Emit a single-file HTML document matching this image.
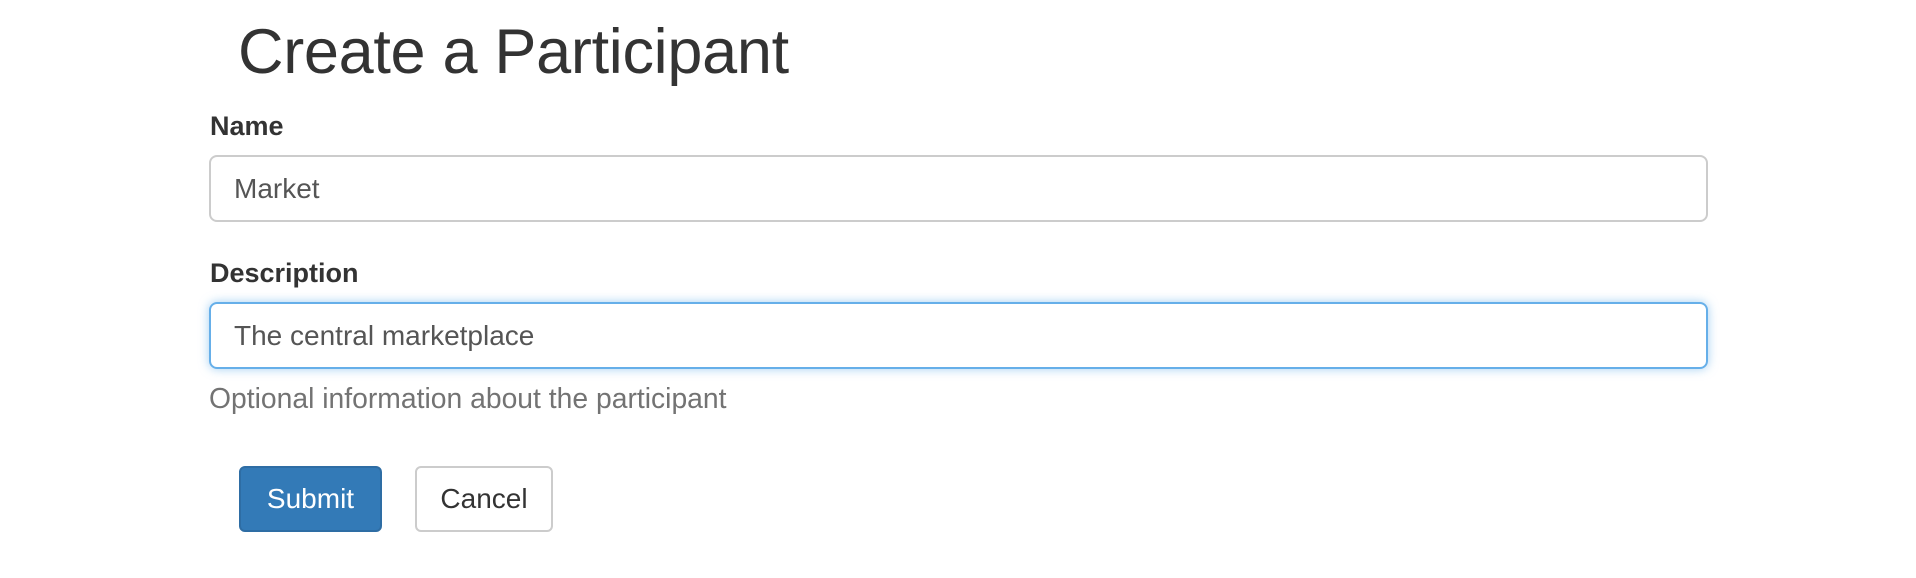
<!DOCTYPE html>
<html><head><style>
body{margin:0;width:1916px;height:578px;background:#fff;font-family:"Liberation Sans",Arial,sans-serif;color:#333;position:relative;overflow:hidden}
h1{position:absolute;left:238px;top:12px;margin:0;font-size:63px;font-weight:normal;line-height:80px;color:#333;letter-spacing:-0.3px}
label{position:absolute;left:210px;font-weight:bold;font-size:27px;line-height:30px}
.inp{position:absolute;left:209px;width:1499px;height:67px;box-sizing:border-box;border:2px solid #ccc;border-radius:8px;font-size:28px;line-height:63px;padding-left:23px;color:#555}
.foc{border-color:#66afe9;box-shadow:0 0 10px rgba(102,175,233,.6)}
.help{position:absolute;left:209px;top:382px;font-size:28.3px;line-height:32px;color:#737373}
.btn{position:absolute;top:466px;height:66px;box-sizing:border-box;border-radius:6px;font-size:28px;line-height:62px;text-align:center}
</style></head><body>
<h1>Create a Participant</h1>
<label style="top:111px">Name</label>
<div class="inp" style="top:155px">Market</div>
<label style="top:258px">Description</label>
<div class="inp foc" style="top:302px">The central marketplace</div>
<div class="help">Optional information about the participant</div>
<div class="btn" style="left:239px;width:143px;background:#337ab7;border:2px solid #2e6da4;color:#fff">Submit</div>
<div class="btn" style="left:415px;width:138px;background:#fff;border:2px solid #ccc;color:#333">Cancel</div>
</body></html>
